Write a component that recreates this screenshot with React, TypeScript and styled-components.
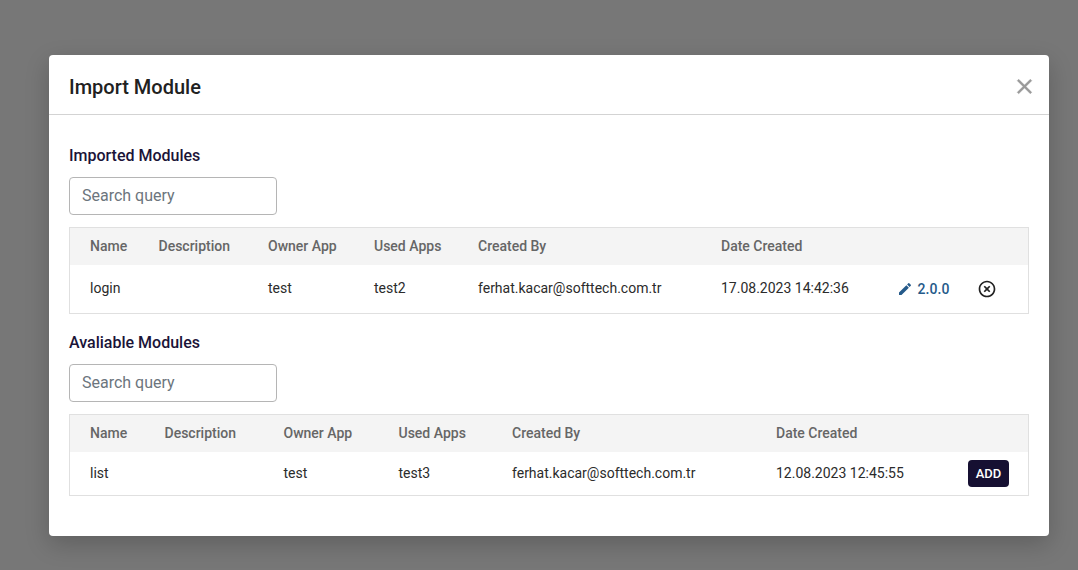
import React from "react";
import styled, { createGlobalStyle } from "styled-components";

const GlobalStyle = createGlobalStyle`
  * { box-sizing: border-box; }
  body {
    margin: 0;
    background: #777;
    font-family: Roboto, "Liberation Sans", sans-serif;
    overflow: hidden;
  }
`;

const Backdrop = styled.div`
  height: 570px;
  padding: 55px 29px 0 49px;
`;

const Dialog = styled.section`
  width: 1000px;
  height: 481px;
  background: #fff;
  border-radius: 4px;
  box-shadow: 0 8px 24px rgba(0, 0, 0, 0.2);
`;

const Header = styled.header`
  display: flex;
  align-items: center;
  justify-content: space-between;
  height: 60px;
  padding: 4px 12px 0 20px;
  border-bottom: 1px solid #d3d3d3;
`;

const Title = styled.h1`
  margin: 0;
  font-size: 20px;
  font-weight: 500;
  line-height: 32px;
  color: #212121;
`;

const CloseButton = styled.button`
  display: flex;
  padding: 0;
  border: 0;
  background: none;
  color: #999;
`;

const Body = styled.div`
  display: flex;
  flex-direction: column;
  gap: 16px;
  padding: 28px 20px 0;
`;

const Group = styled.div`
  display: flex;
  flex-direction: column;
`;

const GroupTitle = styled.h2`
  margin: 0 0 9px;
  font-size: 16px;
  font-weight: 500;
  line-height: 25px;
  color: #1b1438;
`;

const Search = styled.input`
  width: 208px;
  height: 38px;
  margin-bottom: 12px;
  padding: 0 12px 1px;
  border: 1px solid #b5b5b5;
  border-radius: 4px;
  font: 400 16px Roboto, "Liberation Sans", sans-serif;
  &::placeholder { color: #6c757d; opacity: 1; }
`;

const Table = styled.div`
  border: 1px solid #e0e0e0;
  font-size: 14px;
`;

const Row = styled.div<{ $columns: string; $height: number; $head?: boolean }>`
  display: grid;
  grid-template-columns: ${(p) => p.$columns};
  align-items: center;
  height: ${(p) => p.$height}px;
  padding-left: 20px;
  white-space: nowrap;
  color: ${(p) => (p.$head ? "#666" : "#2b2b2b")};
  background: ${(p) => (p.$head ? "#f4f4f4" : "#fff")};
  font-weight: ${(p) => (p.$head ? 500 : 400)};
`;

const Cell = styled.span`
  padding-bottom: 2px;
`;

const Version = styled.a`
  display: flex;
  align-items: center;
  gap: 4.5px;
  color: #255a8a;
  font-weight: 500;
  letter-spacing: 0.1px;

  svg { margin-bottom: 1px; }
`;

const RemoveButton = styled.button`
  display: flex;
  padding: 0 0 1px;
  border: 0;
  background: none;
  color: #212121;
`;

const AddButton = styled.button`
  width: 41px;
  height: 27px;
  padding: 0 0 1px;
  border: 0;
  border-radius: 4px;
  background: #161032;
  color: #fff;
  font: 500 13px Roboto, "Liberation Sans", sans-serif;
`;

function Icon({ d, size, stroke = 0 }: { d: string; size: number; stroke?: number }) {
  return (
    <svg width={size} height={size} viewBox="0 0 24 24" fill="currentColor" stroke="currentColor" strokeWidth={stroke} aria-hidden="true">
      <path d={d} />
    </svg>
  );
}

const CLOSE = "M19 6.41 17.59 5 12 10.59 6.41 5 5 6.41 10.59 12 5 17.59 6.41 19 12 13.41 17.59 19 19 17.59 13.41 12z";
const EDIT = "M3 17.25V21h3.75L17.81 9.94l-3.75-3.75zM20.71 7.04c.39-.39.39-1.02 0-1.41l-2.34-2.34a.996.996 0 0 0-1.41 0l-1.83 1.83 3.75 3.75z";
const REMOVE = "M14.59 8 12 10.59 9.41 8 8 9.41 10.59 12 8 14.59 9.41 16 12 13.41 14.59 16 16 14.59 13.41 12 16 9.41zM12 2C6.47 2 2 6.47 2 12s4.47 10 10 10 10-4.47 10-10S17.53 2 12 2m0 18c-4.41 0-8-3.59-8-8s3.59-8 8-8 8 3.59 8 8-3.59 8-8 8";

const HEADINGS = ["Name", "Description", "Owner App", "Used Apps", "Created By", "Date Created"];

interface ModuleGroupProps {
  title: string;
  columns: string;
  rowHeight: number;
  cells: string[];
  children: React.ReactNode;
}

function ModuleGroup({ title, columns, rowHeight, cells, children }: ModuleGroupProps) {
  return (
    <Group>
      <GroupTitle>{title}</GroupTitle>
      <Search placeholder="Search query" />
      <Table>
        <Row $columns={columns} $height={37} $head>
          {HEADINGS.map((heading) => <Cell key={heading}>{heading}</Cell>)}
        </Row>
        <Row $columns={columns} $height={rowHeight}>
          {cells.map((cell, i) => <Cell key={i}>{cell}</Cell>)}
          {children}
        </Row>
      </Table>
    </Group>
  );
}

export default function App() {
  return (
    <Backdrop>
      <GlobalStyle />
      <Dialog>
        <Header>
          <Title>Import Module</Title>
          <CloseButton aria-label="Close"><Icon d={CLOSE} size={25} stroke={0.4} /></CloseButton>
        </Header>
        <Body>
          <ModuleGroup
            title="Imported Modules"
            columns="68.5px 109.5px 106px 104px 243px 176px 80px 1fr"
            rowHeight={48}
            cells={["login", "", "test", "test2", "ferhat.kacar@softtech.com.tr", "17.08.2023 14:42:36"]}
          >
            <Version><Icon d={EDIT} size={16} />2.0.0</Version>
            <RemoveButton aria-label="Remove"><Icon d={REMOVE} size={20} /></RemoveButton>
          </ModuleGroup>
          <ModuleGroup
            title="Avaliable Modules"
            columns="74.5px 119px 115px 113.5px 264px 192px 1fr"
            rowHeight={43}
            cells={["list", "", "test", "test3", "ferhat.kacar@softtech.com.tr", "12.08.2023 12:45:55"]}
          >
            <AddButton>ADD</AddButton>
          </ModuleGroup>
        </Body>
      </Dialog>
    </Backdrop>
  );
}
